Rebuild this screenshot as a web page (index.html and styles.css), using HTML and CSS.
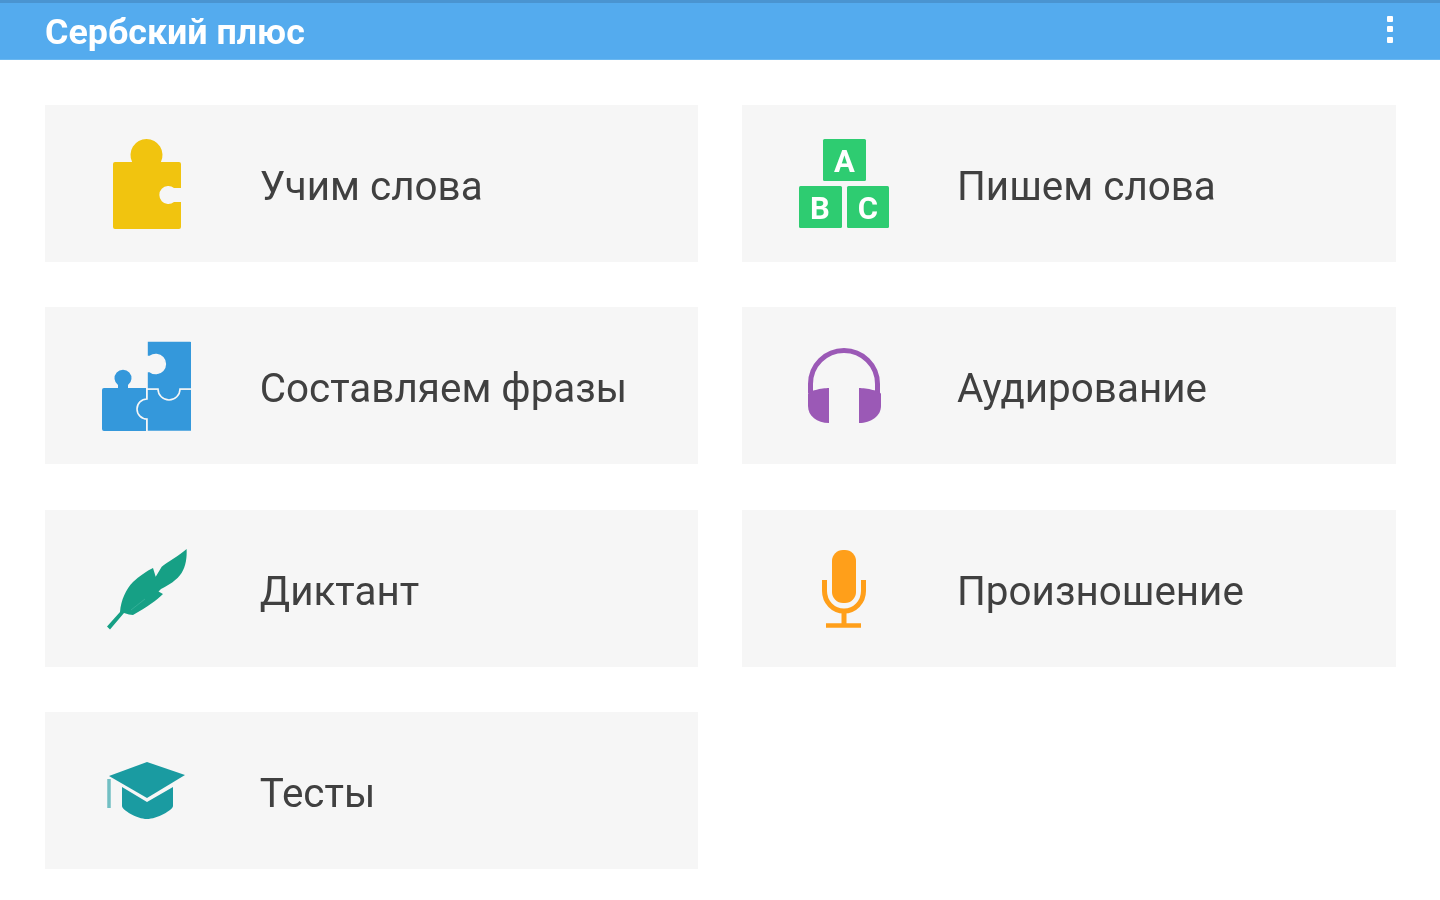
FILE: index.html
```html
<!DOCTYPE html>
<html lang="ru">
<head>
<meta charset="UTF-8">
<title>Сербский плюс</title>
<link rel="stylesheet" href="styles.css">
</head>
<body>

<header class="appbar">
  <h1 class="appbar-title">Сербский плюс</h1>
  <div class="kebab"><span></span><span></span><span></span></div>
</header>

<main class="menu">
  <a class="card">
    <svg class="icon" viewBox="0 0 90 90">
      <path class="yellow" d="M14 23H31.100A16 16 0 1 1 59.900 23H78a2 2 0 0 1 2 2V49H73A9 9 0 1 0 73 63H80V88a2 2 0 0 1-2 2H14a2 2 0 0 1-2-2V25a2 2 0 0 1 2-2Z"/>
    </svg>
    <span class="label">Учим слова</span>
  </a>
  <a class="card">
    <svg class="icon" viewBox="0 0 90 90">
      <rect class="green" x="24" y="0" width="43" height="42" rx="1.5"/>
      <rect class="green" x="0" y="47" width="43" height="42" rx="1.5"/>
      <rect class="green" x="48" y="47" width="42" height="42" rx="1.5"/>
      <text class="block-letter" x="45.500" y="32.500">A</text>
      <text class="block-letter" x="21" y="79.500">B</text>
      <text class="block-letter" x="69" y="79.500">C</text>
    </svg>
    <span class="label">Пишем слова</span>
  </a>
  <a class="card">
    <svg class="icon" viewBox="0 0 90 90">
      <path class="blue" d="M3 47H17V44A8.500 8.500 0 1 1 27 44V47H45V90H3a2 2 0 0 1-2-2V49a2 2 0 0 1 2-2Z"/>
      <path class="blue pieces" d="M46 48H92V88a2.500 2.500 0 0 1-2.500 2.500H46V78A10 10 0 1 1 46 58Z"/>
      <path class="blue pieces" d="M46 0H89a3 3 0 0 1 3 3V48H79A11 11 0 1 1 57 48H46V30.500H49A9.500 9.500 0 1 0 49 15.500H46Z"/>
    </svg>
    <span class="label">Составляем фразы</span>
  </a>
  <a class="card">
    <svg class="icon" viewBox="0 0 90 90">
      <path class="band" d="M11.500 52V43A33.500 33.500 0 0 1 78.500 43V52"/>
      <path class="purple" d="M30 47V82C18 82 9 75 9 65V53C9 50 23 47 30 47Z"/>
      <path class="purple" d="M60 47V82C72 82 82 75 82 65V53C82 50 67 47 60 47Z"/>
    </svg>
    <span class="label">Аудирование</span>
  </a>
  <a class="card">
    <svg class="icon" viewBox="0 0 90 90">
      <path class="teal" d="M85.600 5C86 13 85 22 80.600 29C76 36 68 41 60 45L57.500 47.500L62 50C56 56 46 63 32 71L28 70.500L23 69L9 85.500L6 82.500L19 68C20 56 25 45 32 38C38 32 46 27 52 24L54.700 32.700L60.700 22.700C66 18 78 12 85.600 5Z"/>
      <path class="quill" d="M30 66L44 55"/>
    </svg>
    <span class="label">Диктант</span>
  </a>
  <a class="card">
    <svg class="icon" viewBox="0 0 90 90">
      <rect class="orange" x="33" y="6" width="24" height="53" rx="11"/>
      <path class="mic-holder" d="M25.500 36V47A19.500 20 0 0 0 64.500 47V36"/>
      <path class="mic-holder" d="M45 67V81"/>
      <path class="mic-holder thin" d="M27 81.500H62"/>
    </svg>
    <span class="label">Произношение</span>
  </a>
  <a class="card">
    <svg class="icon" viewBox="0 0 90 90">
      <path class="cyan" d="M21 41L46 56L72 41V60C72 64 56 73 46 73C36 73 21 64 21 60Z"/>
      <path class="cyan" d="M8 30L46 16L84 29L46 52Z"/>
      <path class="tassel" d="M8 33V62"/>
    </svg>
    <span class="label">Тесты</span>
  </a>
</main>

</body>
</html>
```

FILE: styles.css
```css
* { box-sizing: border-box; }

body {
  margin: 0;
  background: #fff;
  font-family: Roboto, "Noto Sans", sans-serif;
}

.appbar {
  display: flex;
  align-items: center;
  justify-content: space-between;
  height: 60px;
  padding: 2px 47px 0 45px;
  background: #54abee;
  border-top: 3px solid #4a94d0;
  border-bottom: 1px solid #6bb8f0;
}
.appbar-title {
  margin: 2px 0 0;
  color: #fff;
  font-size: 35.800px;
  font-weight: 700;
  line-height: 1;
  filter: blur(.5px);
}
.kebab {
  display: flex;
  flex-direction: column;
  gap: 4.500px;
  margin-bottom: 6px;
  filter: blur(.5px);
}
.kebab span {
  width: 6px;
  height: 6px;
  background: #fff;
  border-radius: 1px;
}

.menu {
  display: grid;
  grid-template-columns: 653.250px 653.250px;
  grid-auto-rows: 157px;
  gap: 45.500px 44px;
  padding: 44.750px 44px 0 45px;
}
.card {
  display: flex;
  align-items: center;
  padding-left: 56.300px;
  background: #f6f6f6;
}
.icon {
  flex: none;
  width: 90px;
  height: 90px;
  margin-top: .6px;
  filter: blur(.6px);
}
.label {
  margin-left: 68.500px;
  padding-top: 6px;
  color: #404040;
  font-size: 40.400px;
  filter: blur(.6px);
}

.yellow { fill: #f1c40f; }
.green { fill: #2ecc71; }
.blue { fill: #3498db; }
.pieces { stroke: #f6f6f6; stroke-width: 1.600; }
.purple { fill: #9b59b6; }
.band { fill: none; stroke: #9b59b6; stroke-width: 5; }
.teal { fill: #16a085; }
.quill { fill: none; stroke: #3fb39c; stroke-width: 1; opacity: .7; }
.orange { fill: #ff9f1a; }
.mic-holder { fill: none; stroke: #ff9f1a; stroke-width: 5; }
.mic-holder.thin { stroke-width: 4.500; }
.cyan { fill: #1a9ba1; }
.tassel { fill: none; stroke: #1a9ba1; stroke-width: 3.500; opacity: .6; }
.block-letter {
  fill: #fff;
  font-family: Roboto, sans-serif;
  font-size: 31px;
  font-weight: 700;
  text-anchor: middle;
}
```
